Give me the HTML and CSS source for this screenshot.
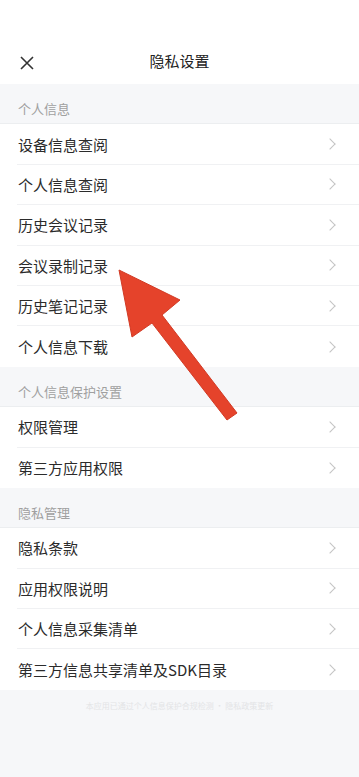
FILE: index.html
```html
<!DOCTYPE html>
<html lang="zh-CN">
<head>
    <meta charset="UTF-8">
    <meta name="viewport" content="width=device-width, initial-scale=1.0">
    <title>隐私设置</title>
    <link rel="stylesheet" href="styles.css">
</head>
<body>

    <!-- Barra superior -->
    <div class="top-bar">
        <div class="nav">
            <svg class="close" width="14" height="14" viewBox="0 0 14 14">
                <path d="M1 1 L13 13 M13 1 L1 13" stroke="#333" stroke-width="1.6" fill="none"/>
            </svg>
            <span class="title">隐私设置</span>
        </div>
    </div>

    <div class="section-title">个人信息</div>
    <div class="group">
        <div class="row"><span>设备信息查阅</span><i class="chev"></i></div>
        <div class="row"><span>个人信息查阅</span><i class="chev"></i></div>
        <div class="row"><span>历史会议记录</span><i class="chev"></i></div>
        <div class="row"><span>会议录制记录</span><i class="chev"></i></div>
        <div class="row"><span>历史笔记记录</span><i class="chev"></i></div>
        <div class="row"><span>个人信息下载</span><i class="chev"></i></div>
    </div>

    <div class="section-title">个人信息保护设置</div>
    <div class="group">
        <div class="row"><span>权限管理</span><i class="chev"></i></div>
        <div class="row"><span>第三方应用权限</span><i class="chev"></i></div>
    </div>

    <div class="section-title">隐私管理</div>
    <div class="group">
        <div class="row"><span>隐私条款</span><i class="chev"></i></div>
        <div class="row"><span>应用权限说明</span><i class="chev"></i></div>
        <div class="row"><span>个人信息采集清单</span><i class="chev"></i></div>
        <div class="row"><span>第三方信息共享清单及SDK目录</span><i class="chev"></i></div>
    </div>

    <p class="footer">本应用已通过个人信息保护合规检测 · 隐私政策更新</p>

    <!-- Flecha roja encima del contenido -->
    <svg class="arrow" width="359" height="777" viewBox="0 0 359 777">
        <polygon points="119,270 180,300 162,315 237,413 227,420 152,323 132,337" fill="#e5432b" stroke="#d23a24" stroke-width="1"/>
    </svg>

</body>
</html>
```

FILE: styles.css
```css
body {
    font-family: "Noto Sans CJK SC", "Noto Sans", sans-serif;
    background-color: #f6f7f9;
    color: #333;
    margin: 0;
    padding: 0;
    position: relative;
    min-height: 777px;
}

/* Barra superior */
.top-bar {
    background: #fff;
    padding-top: 44px;
}

.nav {
    height: 40px;
    display: flex;
    align-items: center;
    justify-content: center;
    position: relative;
}

.close {
    position: absolute;
    left: 20px;
    top: 12px;
}

.title {
    font-size: 15px;
    color: #222;
    margin-bottom: 7px;
}

/* Secciones */
.section-title {
    height: 40.4px;
    box-sizing: border-box;
    padding: 17px 0 0 18px;
    font-size: 13px;
    color: #a0a0a0;
    line-height: 16px;
    border-bottom: 1px solid #eceef0;
}

.group {
    background: #fff;
    padding-left: 17px;
}

.row {
    height: 40.4px;
    box-sizing: border-box;
    display: flex;
    align-items: center;
    justify-content: space-between;
    padding: 0 25px 0 1px;
    font-size: 15px;
    color: #2b2b2b;
    border-bottom: 1px solid #f0f1f3;
}

.row:last-child {
    border-bottom: none;
}

.chev {
    width: 7px;
    height: 7px;
    border-top: 1.2px solid #c4c4c4;
    border-right: 1.2px solid #c4c4c4;
    transform: rotate(45deg);
}

.footer {
    margin: 10px 0 0;
    text-align: center;
    font-size: 8px;
    color: #e3e4e6;
}

.arrow {
    position: absolute;
    left: 0;
    top: 0;
    pointer-events: none;
}
```
